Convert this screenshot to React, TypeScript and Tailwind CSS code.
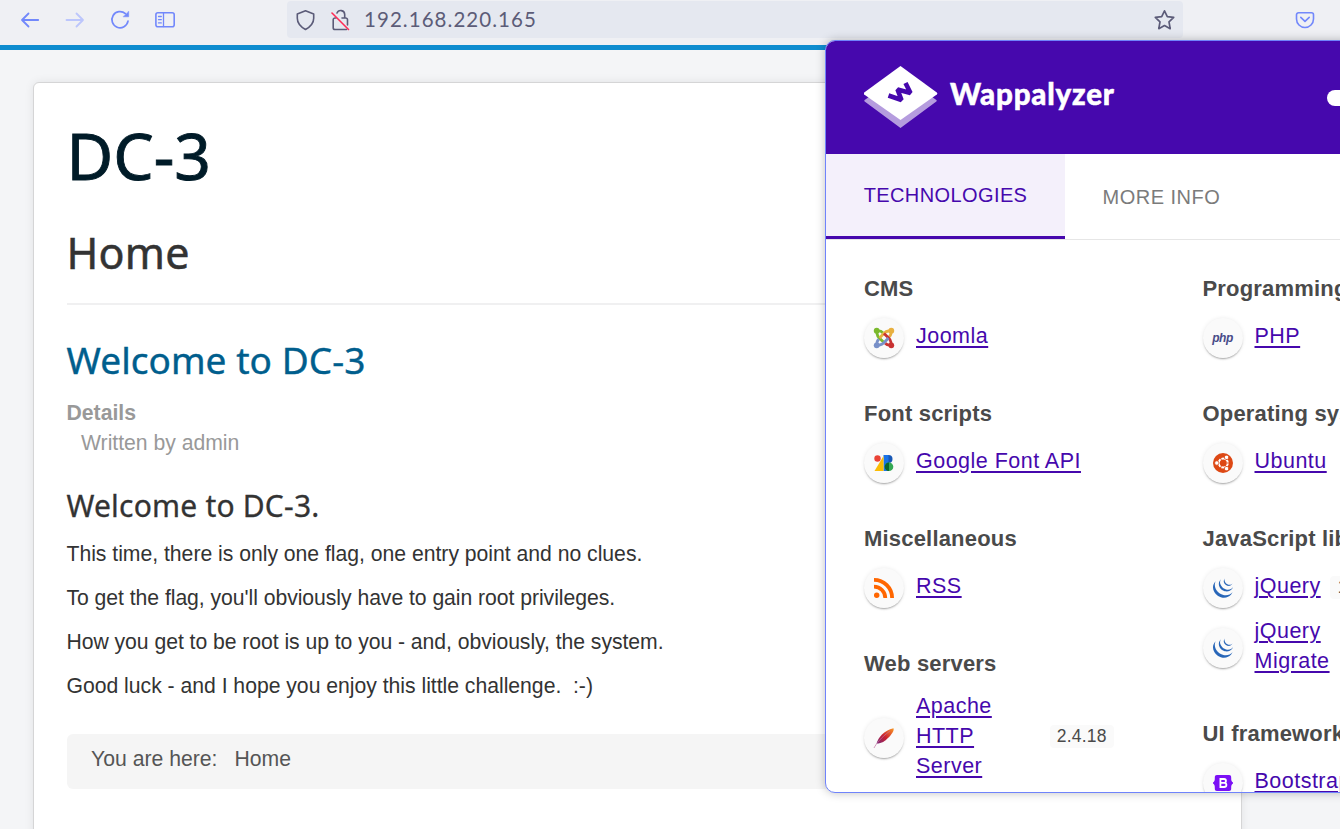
import type { ReactNode } from "react";
import { SiJquery } from "react-icons/si";

function Toolbar() {
  const line = { fill: "none", strokeLinecap: "round", strokeLinejoin: "round" } as const;
  return (
    <header className="flex h-[45px] shrink-0 bg-[#eff0f4] text-[#7288fb]">
      <div className="flex h-10 w-[287px] items-center gap-[25px] pl-5">
        <svg width="20" height="20" viewBox="0 0 20 20" stroke="currentColor" strokeWidth="1.8" {...line}><path d="M18.2 10H2M8.500 3.500 2 10l6.500 6.500" /></svg>
        <svg width="20" height="20" viewBox="0 0 20 20" stroke="#bcc6fc" strokeWidth="1.8" {...line}><path d="M1.500 10H18M11.500 3.500 18 10l-6.500 6.500" /></svg>
        <svg width="20" height="20" viewBox="0 0 20 20" stroke="currentColor" strokeWidth="1.7" {...line}><path d="M18 11.200A8.100 8.100 0 1 1 15.400 3.600" /><path d="M18.700 1.500v5.300h-5.300z" fill="currentColor" strokeWidth=".5" /></svg>
        <svg width="20" height="20" viewBox="0 0 20 20" stroke="currentColor" strokeWidth="1.6" {...line}><rect x=".9" y="2.800" width="18.300" height="14" rx="2" /><path d="M8.500 3v13.500M3.500 6.500h2.800M3.500 9.700h2.800M3.500 12.900h2.800" strokeWidth="1.300" /></svg>
      </div>
      <div className="mt-px flex h-[37px] w-[896px] items-center rounded bg-[#e5e8f0] text-[#5b5b78]">
        <svg className="ml-2" width="21" height="22" viewBox="0 0 21 22" stroke="currentColor" strokeWidth="1.600" {...line}><path d="M10.500 1.700 18.700 5v4.200c0 5.600-4.200 9-8.200 11.300-4-2.300-8.200-5.700-8.200-11.300V5z" /></svg>
        <svg className="ml-[15px]" width="20" height="22" viewBox="0 0 20 22" stroke="currentColor" strokeWidth="1.600" {...line}><path d="M5 9H4a1.800 1.800 0 0 0-1.800 1.800v7.900A1.800 1.800 0 0 0 4 20.500h11.500M16.500 16v-5.200A1.800 1.800 0 0 0 14.700 9h-3.700M13.700 9V5.500a4 4 0 0 0-7.700-1.500" /><path d="M1 4 17.500 20.500" stroke="#ff2b56" strokeWidth="1.600" /></svg>
        <span className="ml-[13px] font-['Lato',sans-serif] text-[20.500px] leading-none tracking-[1.050px] text-[#5c5c78]">192.168.220.165</span>
        <svg className="mr-2 ml-auto" width="21" height="22" viewBox="0 0 21 22" stroke="currentColor" strokeWidth="1.700" {...line}><path d="m10.500 1.800 2.800 5.800 6.400.8-4.700 4.400 1.200 6.900-5.700-3.200-5.700 3.200L6 12.800 1.300 8.400l6.400-.8z" /></svg>
      </div>
      <div className="flex h-10 items-center pl-[112px]">
        <svg width="20" height="20" viewBox="0 0 20 20" stroke="currentColor" strokeWidth="1.600" {...line}><path d="M3.500 2.800h13a2 2 0 0 1 2 2V9a8.500 8.500 0 0 1-17 0V4.800a2 2 0 0 1 2-2ZM5.800 7.300l4.200 4 4.200-4" /></svg>
      </div>
    </header>
  );
}

function Article() {
  return (
    <main className="ml-[33px] mt-8 h-[900px] w-[1209px] rounded-md border border-[#d5d5d6] bg-white px-[32.500px] pt-[29px] text-[#333] shadow-[0_0_10px_rgba(0,0,0,0.08)]">
      <h1 className="h-[88px] font-['Noto_Sans',sans-serif] text-[64px] leading-[88px] text-[#001b28] [-webkit-text-stroke:0.900px]">DC-3</h1>
      <h2 className="mt-[23px] h-[60px] font-['Noto_Sans',sans-serif] text-[43px] leading-[60px] tracking-[0.200px] [-webkit-text-stroke:0.500px]">Home</h2>
      <hr className="mt-[20px] border-t-2 border-[#f0f0f1]" />
      <h2 className="mt-[30px] font-['Noto_Sans',sans-serif] text-[37px] leading-[50px] tracking-[0.050px] text-[#005e8d] [-webkit-text-stroke:0.400px]">Welcome to DC-3</h2>
      <div className="mt-[13px] text-[21.200px] leading-[29.500px] text-[#999]">
        <div className="font-bold">Details</div>
        <div className="pl-[14.500px] tracking-[-0.020px]">Written by admin</div>
      </div>
      <h3 className="mt-[29px] font-['Noto_Sans',sans-serif] text-[30px] leading-[40px] tracking-[0.200px] [-webkit-text-stroke:0.300px]">Welcome to DC-3.</h3>
      <div className="mt-[13px] flex flex-col gap-[14px] text-[21.200px] leading-[30px] tracking-[-0.050px] whitespace-pre">
        <p className="tracking-[-0.020px]">This time, there is only one flag, one entry point and no clues.</p>
        <p>To get the flag, you'll obviously have to gain root privileges.</p>
        <p>How you get to be root is up to you - and, obviously, the system.</p>
        <p className="tracking-[-0.020px]">Good luck - and I hope you enjoy this little challenge.  :-)</p>
      </div>
      <nav className="mt-[33px] flex h-[55px] items-center gap-[17px] rounded-md bg-[#f5f5f5] pb-[5px] pl-[24.500px] text-[21.200px] text-[#555]">
        <span>You are here:</span><span>Home</span>
      </nav>
    </main>
  );
}

function Joomla() {
  return (
    <svg width="22" height="22" viewBox="0 0 22 22">
      {[["#7ab92d", 0], ["#e8b040", 90], ["#c83232", 180], ["#7890c8", 270]].map(([c, r]) => (
        <g key={r} transform={`rotate(${r} 11 11)`} stroke={c as string} fill="none" strokeWidth="2.800">
          <circle cx="3.700" cy="3.700" r="2.900" fill={c as string} stroke="none" />
          <path d="M4 4.500V6.500Q4.300 9 6.300 10.900L11 15.500M4.500 4Q7.800 3.600 9.800 5.800" />
        </g>
      ))}
    </svg>
  );
}

function GoogleFonts() {
  return (
    <svg width="20" height="20" viewBox="0 0 20 20">
      <circle cx="3.500" cy="5.500" r="3.200" fill="#ea4335" />
      <path d="M9.500 2H15v16H9.500z" fill="#1a73e8" />
      <path d="M.5 18 9.500 3v15z" fill="#fbbc04" />
      <path d="M14.500 2a4 4 0 0 1 0 8z" fill="#1757b5" />
      <circle cx="15" cy="13.800" r="4.300" fill="#34a853" />
      <path d="M15 9.500a4.300 4.300 0 0 0 0 8.600z" fill="#0d652d" />
    </svg>
  );
}

function Ubuntu() {
  return (
    <svg width="20" height="20" viewBox="0 0 20 20">
      <circle cx="10" cy="10" r="10" fill="#dd4814" />
      <circle cx="10.300" cy="10" r="4.500" fill="none" stroke="#fff" strokeWidth="2" />
      {[0, 120, 240].map((r) => (
        <g key={r} transform={`rotate(${r} 10.300 10)`}><circle cx="3.800" cy="10" r="2.200" fill="#fff" stroke="#dd4814" strokeWidth=".8" /><path d="M14 10h3" stroke="#dd4814" strokeWidth=".9" /></g>
      ))}
    </svg>
  );
}

function Feather() {
  return (
    <svg width="22" height="22" viewBox="0 0 22 22">
      <defs><linearGradient id="feather" x1="1" y1="0" x2="0" y2="1"><stop stopColor="#f79a23" /><stop offset=".3" stopColor="#e3562a" /><stop offset=".55" stopColor="#c8202f" /><stop offset="1" stopColor="#74297e" /></linearGradient></defs>
      <path d="M3.500 16.500C5 11 11 3 20.500 1.200 21.500 4 18 8 15 11c-3 3-6 5.500-11.500 5.500Z" fill="url(#feather)" />
      <path d="M1 21C3 17 8 10.500 17 4" stroke="#c070a0" strokeWidth=".7" fill="none" />
    </svg>
  );
}

function Php() {
  return <span className="font-['Liberation_Sans',sans-serif] text-[12px] leading-none font-bold tracking-[-0.500px] text-[#484c89] italic">php</span>;
}

function Rss() {
  return <svg width="20" height="20" viewBox="0 0 20 20" fill="none" stroke="#ff6600" strokeWidth="3.800"><circle cx="2.700" cy="17.300" r="2.700" fill="#ff6600" stroke="none" /><path d="M0 8.700A11.300 11.300 0 0 1 11.300 20M0 1.900A18.100 18.100 0 0 1 18.100 20" /></svg>;
}

function Bootstrap() {
  return (
    <svg width="20" height="16" viewBox="0 0 20 16">
      <path d="M4 0h12c1.800 0 2.300 1.300 2.200 3-.1 2 .3 3.800 1.800 4.500v1c-1.500.7-1.900 2.500-1.800 4.500.1 1.700-.4 3-2.200 3H4c-1.800 0-2.300-1.300-2.200-3 .1-2-.3-3.800-1.800-4.500v-1C1.500 6.800 1.900 5 1.800 3 1.700 1.300 2.200 0 4 0Z" fill="#7b10f5" />
      <path d="M7.400 4H11q2 .1 2 1.900 0 1.700-1.800 1.900 2.200.1 2.200 2.100 0 2-2.400 2.100H7.400ZM7.400 7.800h4" fill="none" stroke="#fff" strokeWidth="1.800" />
    </svg>
  );
}

function Group({ title, children }: { title: string; children: ReactNode }) {
  return (
    <section className="mb-[30px]">
      <h3 className="mb-[5px] text-[22px] leading-[30px] font-bold tracking-[0.190px] whitespace-nowrap text-[#4a4a4a]">{title}</h3>
      {children}
    </section>
  );
}

function Item({ icon, name, version, tight = false }: { icon: ReactNode; name: string[]; version?: string; tight?: boolean }) {
  return (
    <div className={tight ? "mb-10 flex h-[60px] items-center" : "flex min-h-[60px] items-center py-[10px]"}>
      <span className="relative -top-px flex size-10 shrink-0 items-center justify-center rounded-full bg-[#fafafa] shadow-[0_2px_2px_-1px_rgba(0,0,0,0.35),0_0_4px_rgba(0,0,0,0.08)]">{icon}</span>
      <a className="relative -top-[3px] ml-3 flex flex-col items-start text-[21.500px] leading-[30px] tracking-[0.480px] whitespace-nowrap text-[#4608ad] underline decoration-[1.500px] underline-offset-[3px]">
        {name.map((n) => <span key={n}>{n}</span>)}
      </a>
      {version && <span className={(version === "2.4.18" ? "-top-[3px] ml-[58px] px-[7px] " : "-top-[2px] ml-[9px] px-2 ") + "relative rounded bg-[#fafafa] text-[17.500px] leading-[23px] tracking-[0.200px] text-[#4a4a4a]"}>{version}</span>}
    </div>
  );
}

function Popup() {
  return (
    <aside className="absolute top-10 left-[825px] h-[753px] w-[620px] overflow-hidden rounded-[10px] border border-[#6f83fb] bg-white shadow-[0_0_10px_rgba(0,0,0,0.25)]">
      <div className="flex h-[113px] items-center bg-[#4608ad] pl-[38px]">
        <svg className="-mt-[2px]" width="74" height="62" viewBox="0 0 74 62">
          <path d="M1 33.800q-1.500 1 0 2L36.500 62 72 35.800q1.500-1 0-2L36.500 8Z" fill="#b59cde" />
          <path d="M36.500 0 72.800 26.500q1 1 0 2L36.500 54 .2 28.500q-1-1 0-2Z" fill="#fff" />
          <path d="M24.500 29.500 37.500 34 33.500 23.500 46.500 27 41.500 17" fill="none" stroke="#4608ad" strokeWidth="4.600" strokeMiterlimit="2" />
        </svg>
        <span className="-mt-[8px] ml-3 w-[165px] font-['Lato',sans-serif] text-[29.500px] leading-none font-black tracking-[0.800px] text-white [-webkit-text-stroke:0.500px]">Wappalyzer</span>
        <span className="ml-[212px] h-4 w-8 rounded-full bg-white" />
      </div>
      <div className="flex h-[86px] border-b border-[#e6e6e6] text-[20px] tracking-[0.400px]">
        <div className="-mb-px flex h-[85px] w-[239px] items-center justify-center border-b-3 border-[#4608ad] bg-[#f4f0fb] text-[#4608ad]">TECHNOLOGIES</div>
        <div className="flex items-center pt-px pl-[37.500px] tracking-[0.500px] text-[#7b7b7b]">MORE INFO</div>
      </div>
      <div className="flex pt-[34px] pl-[38px]">
        <div className="w-[338.500px] shrink-0">
          <Group title="CMS"><Item icon={<Joomla />} name={["Joomla"]} /></Group>
          <Group title="Font scripts"><Item icon={<GoogleFonts />} name={["Google Font API"]} /></Group>
          <Group title="Miscellaneous"><Item icon={<Rss />} name={["RSS"]} /></Group>
          <Group title="Web servers"><Item icon={<Feather />} name={["Apache", "HTTP", "Server"]} version="2.4.18" /></Group>
        </div>
        <div className="w-[300px] shrink-0">
          <Group title="Programming languages"><Item icon={<Php />} name={["PHP"]} /></Group>
          <Group title="Operating systems"><Item icon={<Ubuntu />} name={["Ubuntu"]} /></Group>
          <Group title="JavaScript libraries">
            <Item icon={<SiJquery size={20} color="#2866b8" />} name={["jQuery"]} version="1.12.4" />
            <Item icon={<SiJquery size={20} color="#2866b8" />} name={["jQuery", "Migrate"]} tight />
          </Group>
          <Group title="UI frameworks"><Item icon={<Bootstrap />} name={["Bootstrap"]} /></Group>
        </div>
      </div>
    </aside>
  );
}

export default function App() {
  return (
    <div className="relative flex h-[829px] w-[1340px] flex-col overflow-hidden bg-[#f4f5f7] font-['Liberation_Sans',sans-serif]">
      <Toolbar />
      <div className="h-[5px] shrink-0 bg-[#0e8ccf]" />
      <div className="min-h-0 grow overflow-hidden"><Article /></div>
      <Popup />
    </div>
  );
}
